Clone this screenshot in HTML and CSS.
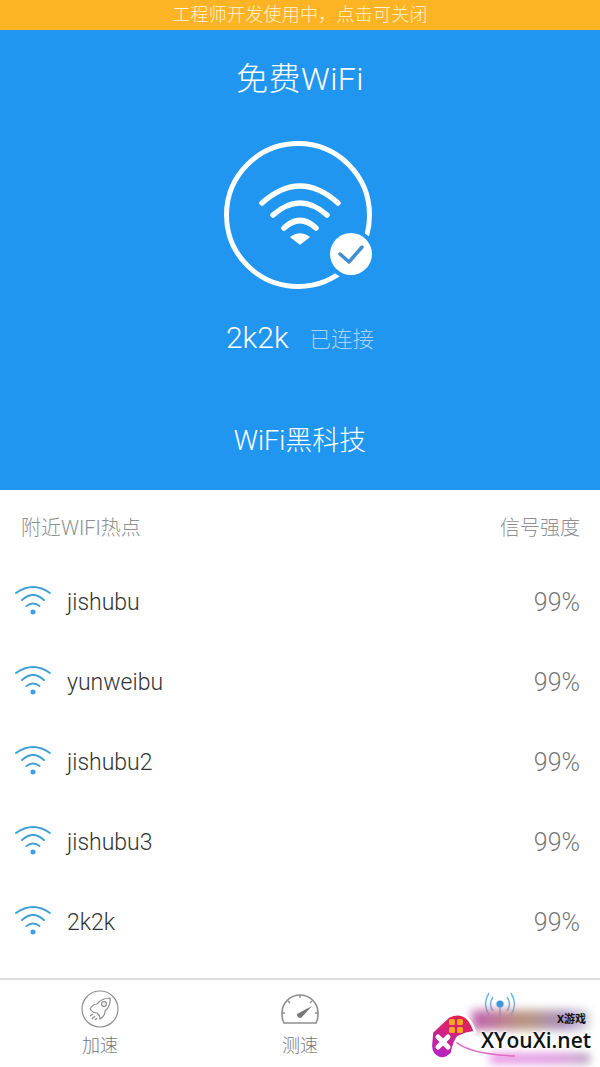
FILE: index.html

```html
<!DOCTYPE html>
<html lang="zh-CN">
<head>
  <meta charset="UTF-8" />
  <title>免费WiFi</title>
  <link rel="stylesheet" href="styles.css">
</head>
<body>
  <div class="app">
    <div class="notice">工程师开发使用中，点击可关闭</div>

    <section class="hero">
      <h1 class="hero-title">免费WiFi</h1>
      <svg class="hero-icon" width="150" height="156" viewBox="0 0 150 156">
        <circle cx="73" cy="77" r="71.5" fill="none" stroke="#fff" stroke-width="5" />
        <g fill="none" stroke="#fff" stroke-width="5.5" stroke-linecap="round">
          <path d="M37 65 Q75 31 113 65" />
          <path d="M48 77 Q75 53 102 77" />
          <path d="M59 90 Q75 75 91 90" />
        </g>
        <path d="M66 99 Q75 93 84 99 L75 106 Z" fill="#fff" stroke="#fff" stroke-width="1.5" stroke-linejoin="round" />
        <circle cx="126" cy="116" r="25" fill="#2196f0" />
        <circle cx="126" cy="116" r="21" fill="#fff" />
        <path d="M115 116 L124 124 L137 109" fill="none" stroke="#3f8fd0" stroke-width="3.5" stroke-linecap="round" stroke-linejoin="round" />
      </svg>
      <div class="hero-status">
        <span class="hero-ssid">2k2k</span>
        <span class="hero-state">已连接</span>
      </div>
      <div class="hero-link">WiFi黑科技</div>
    </section>

    <div class="list-head">
      <span>附近WIFI热点</span>
      <span>信号强度</span>
    </div>

    <ul class="wifi-list">
      <li class="wifi-row">
        <svg class="wifi-icon" width="38" height="30" viewBox="0 0 38 30"><use href="#wifi" /></svg>
        <span class="wifi-name">jishubu</span>
        <span class="wifi-signal">99%</span>
      </li>
      <li class="wifi-row">
        <svg class="wifi-icon" width="38" height="30" viewBox="0 0 38 30"><use href="#wifi" /></svg>
        <span class="wifi-name">yunweibu</span>
        <span class="wifi-signal">99%</span>
      </li>
      <li class="wifi-row">
        <svg class="wifi-icon" width="38" height="30" viewBox="0 0 38 30"><use href="#wifi" /></svg>
        <span class="wifi-name">jishubu2</span>
        <span class="wifi-signal">99%</span>
      </li>
      <li class="wifi-row">
        <svg class="wifi-icon" width="38" height="30" viewBox="0 0 38 30"><use href="#wifi" /></svg>
        <span class="wifi-name">jishubu3</span>
        <span class="wifi-signal">99%</span>
      </li>
      <li class="wifi-row">
        <svg class="wifi-icon" width="38" height="30" viewBox="0 0 38 30"><use href="#wifi" /></svg>
        <span class="wifi-name">2k2k</span>
        <span class="wifi-signal">99%</span>
      </li>
    </ul>

    <nav class="tabbar">
      <div class="tab">
        <svg width="38" height="38" viewBox="0 0 38 38" fill="none" stroke="#8e8e8e" stroke-width="1.2">
          <circle cx="19" cy="19" r="18" />
          <path d="M9 19 Q12 14 16 14 Q21 8 29 8 Q30 16 24 21 Q24 26 19 29 Q19 25 16 23 Q12 23 9 19 Z" />
          <circle cx="23" cy="14" r="2.4" />
          <path d="M9 26 L12 24 M11 29 L14 26 M14 30 L16 28" />
        </svg>
        <span class="tab-label">加速</span>
      </div>
      <div class="tab">
        <svg width="38" height="38" viewBox="0 0 38 38" fill="none" stroke="#8e8e8e" stroke-width="1.4">
          <path d="M3 33 Q1 30 1 23 A18 18 0 0 1 37 23 Q37 30 35 33 Z" stroke-width="1.6" />
          <path d="M19 5 V8 M7 11 L9 13 M31 11 L29 13 M1 23 H4 M37 23 H34" />
          <path d="M16 24 L31 16 L20 28 Q16 28 16 24 Z" fill="#777" stroke="none" />
        </svg>
        <span class="tab-label">测速</span>
      </div>
      <div class="tab">
        <svg width="38" height="38" viewBox="0 0 38 38" fill="none" stroke="#6db4e8" stroke-width="1.5">
          <path d="M12 7 Q7 14 12 21 M8 3 Q1 14 8 25 M26 7 Q31 14 26 21 M30 3 Q37 14 30 25" />
          <path d="M19 14 V34" />
          <circle cx="19" cy="14" r="3.6" fill="#2f9be6" stroke="none" />
        </svg>
      </div>
    </nav>

    <div class="watermark">
      <div class="watermark-glow"></div>
      <div class="watermark-glow-low"></div>
      <svg class="watermark-pad" width="100" height="56" viewBox="0 0 100 56">
        <defs>
          <linearGradient id="pad" x1="0.6" y1="0" x2="0.3" y2="1">
            <stop offset="0" stop-color="#e8204a" />
            <stop offset="1" stop-color="#b426c4" />
          </linearGradient>
        </defs>
        <path d="M23 31 Q35 46 85 48" fill="none" stroke="#e06cc8" stroke-width="1.5" />
        <path d="M2 24 L18 9 Q26 5 32 7 Q40 9 45 24 Q36 25 28 29 Q24 34 22 45 Q16 52 9 50 Q0 46 1 36 Z" fill="url(#pad)" stroke="#fff" stroke-width="2.5" />
        <g fill="#f5a623">
          <rect x="19" y="11" width="6" height="6" rx="1.5" /><rect x="27" y="11" width="6" height="6" rx="1.5" />
          <rect x="19" y="19" width="6" height="6" rx="1.5" /><rect x="27" y="19" width="6" height="6" rx="1.5" />
        </g>
        <path d="M8 29 L18 39 M18 29 L8 39" stroke="#fff" stroke-width="5" stroke-linecap="round" />
      </svg>
      <span class="watermark-cn">X游戏</span>
      <span class="watermark-en">XYouXi.net</span>
    </div>

    <svg class="sprite" width="0" height="0">
      <defs>
        <g id="wifi" fill="none" stroke="#3d9fd8" stroke-width="2" stroke-linecap="round">
          <path d="M2 6 Q19 -6 36 6" />
          <path d="M8 13 Q19 3 30 13" />
          <path d="M12.5 19 Q19 14 25.5 19" />
          <circle cx="19" cy="25" r="2.5" fill="#3d9fd8" stroke="none" />
        </g>
      </defs>
    </svg>
  </div>
</body>
</html>
```

FILE: styles.css

```css
* {
  box-sizing: border-box;
}

body {
  margin: 0;
  font-family: "Roboto", "Noto Sans CJK SC", sans-serif;
  font-weight: 300;
  background-color: #fff;
}

svg {
  overflow: visible;
}

.app {
  position: relative;
  width: 600px;
  height: 1067px;
  overflow: hidden;
  display: flex;
  flex-direction: column;
}

.notice {
  height: 30px;
  line-height: 30px;
  background-color: #fdb424;
  color: #fff3d6;
  font-size: 18px;
  letter-spacing: 0.25px;
  text-align: center;
}

.hero {
  height: 460px;
  background-color: #2196f0;
  color: #fff;
  display: flex;
  flex-direction: column;
  align-items: center;
  padding-top: 27px;
}

.hero-title {
  margin: 0;
  height: 44px;
  line-height: 44px;
  font-size: 32px;
  font-weight: 300;
  letter-spacing: 0.5px;
}

.hero-icon {
  display: block;
  margin-top: 37px;
}

.hero-status {
  display: flex;
  align-items: center;
  gap: 21px;
  margin-top: 23px;
  height: 40px;
}

.hero-ssid {
  font-size: 30px;
}

.hero-state {
  font-size: 21.5px;
  color: #a6d5f9;
}

.hero-link {
  margin-top: 64px;
  font-size: 27px;
  line-height: 40px;
}

.list-head {
  height: 72px;
  padding: 0 20px 0 21px;
  display: flex;
  justify-content: space-between;
  align-items: center;
  font-size: 20px;
  color: #8f8f8f;
}

.wifi-list {
  list-style: none;
  margin: 0;
  padding: 0;
  flex: 1;
}

.wifi-row {
  height: 80px;
  padding: 0 20px 0 14px;
  display: flex;
  align-items: center;
}

.wifi-icon {
  flex-shrink: 0;
}

.wifi-name {
  flex: 1;
  margin-left: 15px;
  font-size: 23px;
  color: #333;
}

.wifi-signal {
  font-size: 25px;
  color: #777;
}

.tabbar {
  height: 89px;
  border-top: 2px solid #dcdcdc;
  padding-top: 10px;
  display: flex;
}

.tab {
  flex: 1;
  display: flex;
  flex-direction: column;
  align-items: center;
  gap: 6px;
}

.tab-label {
  font-size: 18px;
  line-height: 24px;
  color: #777;
}

.watermark {
  position: absolute;
  left: 430px;
  top: 1008px;
  width: 170px;
  height: 59px;
}

.watermark-glow {
  position: absolute;
  left: 42px;
  top: 2px;
  width: 118px;
  height: 20px;
  background: linear-gradient(90deg, #c060b0, #b9977e 45%, #a88fc4 80%, #ddd);
  filter: blur(5px);
}

.watermark-glow-low {
  position: absolute;
  left: 60px;
  top: 45px;
  width: 100px;
  height: 11px;
  background: linear-gradient(90deg, #eb9ae8, #dc98dc 70%, #b9a6c0);
  filter: blur(4px);
}

.watermark-pad {
  position: absolute;
  left: 0;
  top: 0;
}

.watermark-cn {
  position: absolute;
  left: 127px;
  top: 5px;
  font-size: 11px;
  line-height: 14px;
  font-weight: 700;
  color: #111;
}

.watermark-en {
  position: absolute;
  left: 51px;
  top: 17px;
  font-family: "Open Sans", sans-serif;
  font-size: 21px;
  line-height: 30px;
  font-weight: 600;
  color: #111;
  text-shadow: 0 0 2px #fff, 0 0 3px #fff, 0 0 5px #fff;
}

.sprite {
  position: absolute;
}
```
